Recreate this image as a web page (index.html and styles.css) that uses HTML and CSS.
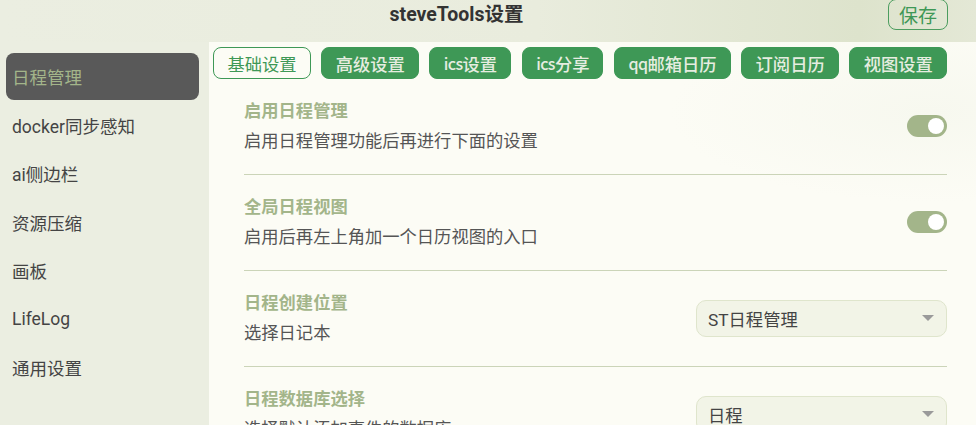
FILE: index.html
```html
<!DOCTYPE html>
<html lang="zh">
<head>
<meta charset="utf-8">
<title>steveTools设置</title>
<link rel="stylesheet" href="styles.css">
</head>
<body>
<div class="app">
  <header class="header">
    <div class="title">steveTools设置</div>
    <button class="save">保存</button>
  </header>
  <div class="body">
    <nav class="sidebar">
      <div class="nav-item active">日程管理</div>
      <div class="nav-item">docker同步感知</div>
      <div class="nav-item">ai侧边栏</div>
      <div class="nav-item">资源压缩</div>
      <div class="nav-item">画板</div>
      <div class="nav-item">LifeLog</div>
      <div class="nav-item">通用设置</div>
    </nav>
    <main class="main">
      <div class="tabs">
        <div class="tab current">基础设置</div>
        <div class="tab">高级设置</div>
        <div class="tab"><span class="latin">ics</span>设置</div>
        <div class="tab"><span class="latin">ics</span>分享</div>
        <div class="tab"><span class="latin">qq</span>邮箱日历</div>
        <div class="tab">订阅日历</div>
        <div class="tab">视图设置</div>
      </div>
      <div class="rows">
        <div class="row">
          <div class="text">
            <div class="row-title">启用日程管理</div>
            <div class="row-desc">启用日程管理功能后再进行下面的设置</div>
          </div>
          <div class="toggle"><span class="knob"></span></div>
        </div>
        <div class="row">
          <div class="text">
            <div class="row-title">全局日程视图</div>
            <div class="row-desc">启用后再左上角加一个日历视图的入口</div>
          </div>
          <div class="toggle"><span class="knob"></span></div>
        </div>
        <div class="row">
          <div class="text">
            <div class="row-title">日程创建位置</div>
            <div class="row-desc">选择日记本</div>
          </div>
          <div class="select"><span>ST日程管理</span><span class="caret"></span></div>
        </div>
        <div class="row">
          <div class="text">
            <div class="row-title">日程数据库选择</div>
            <div class="row-desc">选择默认添加事件的数据库</div>
          </div>
          <div class="select"><span>日程</span><span class="caret"></span></div>
        </div>
      </div>
    </main>
  </div>
</div>
</body>
</html>
```
FILE: styles.css
```css
* { box-sizing: border-box; }
html, body { margin: 0; padding: 0; }
body {
  width: 976px;
  height: 425px;
  overflow: hidden;
  font-family: Roboto, "Noto Sans CJK SC", sans-serif;
  background: #ebeee1;
  color: #444;
}
.app { display: flex; flex-direction: column; height: 425px; }

.header {
  height: 42px;
  flex: none;
  display: flex;
  align-items: flex-start;
  padding-right: 28px;
  background: linear-gradient(90deg, #ebeee1 0%, #e9ecdd 55%, #dde3cc 88%, #e4e8d6 100%);
}
.title {
  flex: 1;
  text-align: center;
  padding-left: 25px;
  line-height: 30px;
  font-size: 19.5px;
  font-weight: 700;
  color: #333;
}
.save {
  height: 31px;
  margin-top: -1px;
  padding: 0 10px;
  font-family: inherit;
  font-size: 19px;
  color: #3e9856;
  background: transparent;
  border: 1px solid #4c9d5f;
  border-radius: 8px;
}

.body { flex: 1; display: flex; min-height: 0; }

.sidebar {
  width: 209px;
  flex: none;
  padding: 11px 10px 0 6px;
  display: flex;
  flex-direction: column;
  gap: 1.5px;
}
.nav-item {
  height: 47px;
  display: flex;
  align-items: center;
  padding-left: 6px;
  font-size: 17.5px;
  color: #444;
  border-radius: 8px;
}
.nav-item.active { background: #595959; color: #a3b58a; }

.main {
  flex: 1;
  background: radial-gradient(ellipse 260px 90px at 720px 70px, #f7f8ef 0%, #fcfcf5 100%), #fcfcf5;
  background-color: #fcfcf5;
  overflow: hidden;
}
.tabs {
  display: flex;
  gap: 10.5px;
  padding: 5px 0 0 4px;
}
.tab {
  height: 32px;
  padding: 0 13px 0 13.5px;
  display: flex;
  align-items: center;
  font-family: "Noto Sans CJK SC", sans-serif;
  font-size: 17.3px;
  font-weight: 500;
  color: #e6ede0;
  background: #3e9856;
  border: 1px solid #3e9856;
  border-radius: 8px;
  white-space: nowrap;
}
.tab.current { background: transparent; color: #3e9856; font-weight: 400; }
.latin { font-size: 16px; letter-spacing: -0.6px; }

.rows { padding: 0 29px 0 35px; }
.row {
  display: flex;
  align-items: center;
  justify-content: space-between;
  padding: 20px 0 21px;
  border-bottom: 1px solid #cbd4b8;
}
.row-title {
  line-height: 24px;
  font-size: 17.3px;
  font-weight: 700;
  color: #a3b58a;
}
.row-desc {
  margin-top: 6px;
  line-height: 24px;
  font-size: 17.3px;
  color: #555;
}
.toggle {
  width: 40px;
  height: 22px;
  border-radius: 11px;
  background: #a3b58a;
  display: flex;
  align-items: center;
  justify-content: flex-end;
  padding-right: 3px;
}
.knob { width: 16px; height: 16px; border-radius: 50%; background: #fff; }

.select {
  width: 251px;
  height: 37px;
  display: flex;
  align-items: center;
  justify-content: space-between;
  padding: 0 12px 0 11px;
  font-size: 17.3px;
  color: #444;
  background: #f2f4e7;
  border: 1px solid #dfe5cc;
  border-radius: 10px;
}
.caret {
  width: 0;
  height: 0;
  border-left: 6px solid transparent;
  border-right: 6px solid transparent;
  border-top: 6px solid #9a9a9a;
}
```
